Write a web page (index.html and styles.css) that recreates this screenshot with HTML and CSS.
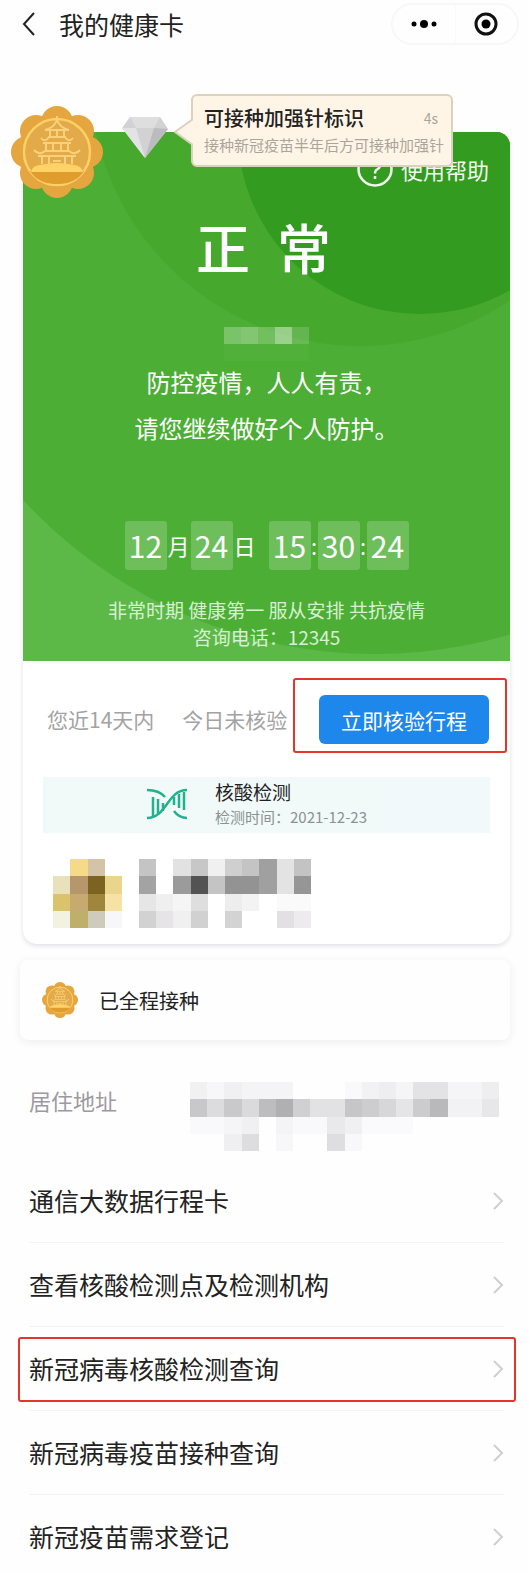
FILE: index.html
```
<!DOCTYPE html>
<html lang="zh-CN">
<head>
  <meta charset="UTF-8">
  <meta name="viewport" content="width=device-width, initial-scale=1.0">
  <title>我的健康卡</title>
  <link rel="stylesheet" href="styles.css">
</head>
<body>
  <svg class="defs" aria-hidden="true">
    <symbol id="medal" viewBox="0 0 92 92">
      <g fill="#e5a53f">
        <circle cx="46" cy="46" r="38"/>
        <circle cx="46" cy="16" r="16"/>
        <circle cx="67" cy="25" r="16"/>
        <circle cx="76" cy="46" r="16"/>
        <circle cx="67" cy="67" r="16"/>
        <circle cx="46" cy="76" r="16"/>
        <circle cx="25" cy="67" r="16"/>
        <circle cx="16" cy="46" r="16"/>
        <circle cx="25" cy="25" r="16"/>
      </g>
      <circle cx="46" cy="46" r="33" fill="#e2aa49" stroke="#ffd067" stroke-width="2.5"/>
      <path d="M19 65h54q-8 13-27 13t-27-13z" fill="#e09c2c"/>
      <path d="M20 66q1-6 9-7 17-4 34 0 8 1 9 7z" fill="#ffd267"/>
      <g fill="none" stroke="#fad17a" stroke-width="2">
        <path d="M46 10v6M46 14q-3 8-12 10h24q-9-2-12-10zM39 25v6M46 25v6M53 25v6"/>
        <path d="M30 32q4 5 8-1h16q4 6 8 1M32 37h28M35 38v6M42 38v6M50 38v6M57 38v6"/>
        <path d="M23 44q5 6 11 1h24q6 5 11-1M27 50h38M31 51v7M38 51v7M42 55h8M54 51v7M61 51v7"/>
      </g>
    </symbol>
    <symbol id="arrow" viewBox="0 0 12 20">
      <path d="M2 2l8 8-8 8" fill="none" stroke="currentColor" stroke-width="2"/>
    </symbol>
  </svg>

  <header class="top-bar">
    <a href="#" class="back" aria-label="返回">
      <svg width="14" height="24" viewBox="0 0 14 24"><path d="M12 1L2 12l10 11" fill="none" stroke="#222" stroke-width="2"/></svg>
    </a>
    <h1>我的健康卡</h1>
    <div class="capsule">
      <button type="button" aria-label="更多">
        <svg width="28" height="24" viewBox="0 0 28 24"><circle cx="4" cy="12" r="2.5"/><circle cx="14" cy="12" r="4"/><circle cx="24" cy="12" r="2.5"/></svg>
      </button>
      <button type="button" aria-label="关闭">
        <svg width="24" height="24" viewBox="0 0 24 24"><circle cx="12" cy="12" r="10" fill="none" stroke="#111" stroke-width="3"/><circle cx="12" cy="12" r="4.5"/></svg>
      </button>
    </div>
  </header>

  <main>
    <section class="card">
      <svg class="medal-large" width="92" height="92"><use href="#medal"/></svg>
      <svg class="diamond" width="46" height="42" viewBox="0 0 46 42">
        <path d="M8 1h30l8 12-23 29L0 12z" fill="#d2d2d4"/>
        <path d="M8 1h30l-6 11H14z" fill="#dededf"/>
        <path d="M0 12h14l9 30z" fill="#e3e3e5"/>
        <path d="M46 13l-14-1-9 30z" fill="#bcbcbf"/>
      </svg>
      <div class="tooltip" role="status">
        <svg class="tip" width="19" height="28" viewBox="0 0 19 28"><path d="M19 1L1 14l18 13" fill="#fff5e6" stroke="#d9d2bc" stroke-width="2"/></svg>
        <div class="tooltip-head"><strong>可接种加强针标识</strong><span>4s</span></div>
        <p>接种新冠疫苗半年后方可接种加强针</p>
      </div>

      <div class="status">
        <svg class="status-bg" viewBox="0 0 487 530" preserveAspectRatio="xMaxYMin slice" aria-hidden="true">
          <rect width="487" height="530" fill="#5cb948"/>
          <circle cx="352" cy="43" r="479" fill="#4cae34"/>
          <circle cx="337" cy="-56" r="270" fill="#46a92e"/>
          <circle cx="397" cy="0" r="182" fill="#339b20"/>
        </svg>
        <a href="#" class="help">
          <svg width="36" height="36" viewBox="0 0 36 36" fill="none" stroke="#f1faee" stroke-width="2.5"><circle cx="18" cy="18" r="16.5"/><path d="M13 14q0-5 5-5t5 5q0 3-3 4.500-2 1-2 4M18 25v3"/></svg>
          使用帮助
        </a>
        <h2><span>正</span><span>常</span></h2>
        <svg class="name-mosaic" width="85" height="34" viewBox="0 0 5 2" shape-rendering="crispEdges" fill="#fff">
          <path d="M0 0h1v1H0z" opacity=".26"/><path d="M1 0h1v1H1z" opacity=".3"/><path d="M2 0h1v1H2z" opacity=".22"/><path d="M3 0h1v1H3z" opacity=".44"/><path d="M4 0h1v1H4z" opacity=".16"/>
          <path d="M0 1h5v1H0z" opacity=".03"/>
        </svg>
        <p class="slogan">防控疫情，人人有责，<br>请您继续做好个人防护。</p>
        <div class="clock">
          <b>12</b><span>月</span><b>24</b><span>日</span>
          <b class="hour">15</b><i>:</i><b>30</b><i>:</i><b>24</b>
        </div>
        <p class="note">非常时期 健康第一 服从安排 共抗疫情<br>咨询电话：12345</p>
      </div>

      <div class="trip">
        <p><span>您近14天内</span><span>今日未核验</span></p>
        <div class="marked"><button type="button">立即核验行程</button></div>
      </div>

      <div class="test">
        <svg width="42" height="32" viewBox="0 0 42 32" fill="none" stroke="#20b28c" stroke-width="2.500">
          <path d="M1 2q12 0 18 7M1 30c20 0 20-28 40-28M28 23q5 7 13 7"/>
          <path d="M7 9v20M12 11v16M17 15v8M28 9v8M33 6v14M38 4v18"/>
        </svg>
        <div>
          <h3>核酸检测</h3>
          <p>检测时间：2021-12-23</p>
        </div>
      </div>

      <div class="person">
        <svg width="69" height="69" viewBox="0 0 4 4" shape-rendering="crispEdges">
          <path d="M1 0h1v1H1z" fill="#f5da87"/><path d="M2 0h1v1H2z" fill="#d3c4a7"/>
          <path d="M0 1h1v1H0z" fill="#e9e1bc"/><path d="M1 1h1v1H1z" fill="#b6976b"/><path d="M2 1h1v1H2z" fill="#7d6321"/><path d="M3 1h1v1H3z" fill="#e9d58c"/>
          <path d="M0 2h1v1H0z" fill="#dbc36c"/><path d="M1 2h1v1H1z" fill="#c7aa70"/><path d="M2 2h1v1H2z" fill="#a0863d"/><path d="M3 2h1v1H3z" fill="#f8e1a4"/>
          <path d="M0 3h1v1H0z" fill="#f1f2df"/><path d="M1 3h1v1H1z" fill="#beb06a"/><path d="M2 3h1v1H2z" fill="#cecbbd"/><path d="M3 3h1v1H3z" fill="#f8f7f8"/>
        </svg>
        <svg width="172" height="69" viewBox="0 0 10 4" preserveAspectRatio="none" shape-rendering="crispEdges">
          <path d="M0 0h1v1H0z" fill="#c4c4c4"/><path d="M2 0h1v1H2z" fill="#e2e2e2"/><path d="M3 0h1v1H3z" fill="#c7c7c7"/><path d="M4 0h1v1H4z" fill="#f0f0f0"/><path d="M5 0h1v1H5z" fill="#cfcfcf"/><path d="M6 0h1v1H6z" fill="#c4c4c4"/><path d="M7 0h1v2H7z" fill="#a0a0a0"/><path d="M8 0h1v2H8z" fill="#e3e3e3"/><path d="M9 0h1v1H9z" fill="#c3c3c3"/>
          <path d="M0 1h1v1H0z" fill="#a3a3a3"/><path d="M2 1h1v1H2z" fill="#9b9b9b"/><path d="M3 1h1v1H3z" fill="#535353"/><path d="M4 1h1v1H4z" fill="#c4c4c4"/><path d="M5 1h2v1H5z" fill="#939393"/><path d="M9 1h1v1H9z" fill="#969696"/>
          <path d="M0 2h1v1H0z" fill="#e6e6e6"/><path d="M1 2h1v1H1z" fill="#efefef"/><path d="M2 2h1v1H2z" fill="#f5f5f5"/><path d="M3 2h1v1H3z" fill="#dededf"/><path d="M5 2h1v1H5z" fill="#ededed"/><path d="M6 2h1v1H6z" fill="#f3f3f3"/><path d="M8 2h2v1H8z" fill="#fafafa"/>
          <path d="M0 3h1v1H0z" fill="#d3d2d3"/><path d="M1 3h1v1H1z" fill="#e6e4e6"/><path d="M2 3h1v1H2z" fill="#f1f0f1"/><path d="M3 3h1v1H3z" fill="#d2d1d2"/><path d="M5 3h1v1H5z" fill="#d4d3d4"/><path d="M8 3h1v1H8z" fill="#e2e0e2"/><path d="M9 3h1v1H9z" fill="#edebed"/>
        </svg>
      </div>
    </section>

    <section class="vaccine">
      <svg width="36" height="36"><use href="#medal"/></svg>
      <span>已全程接种</span>
    </section>

    <section class="address">
      <span>居住地址</span>
      <svg width="309" height="69" viewBox="0 0 18 4" preserveAspectRatio="none" shape-rendering="crispEdges">
        <path d="M0 0h1v1H0z" fill="#f2f1f2"/><path d="M1 0h1v1H1z" fill="#f7f6f8"/><path d="M2 0h1v1H2z" fill="#f0eff1"/><path d="M3 0h3v1H3z" fill="#f4f3f5"/><path d="M9 0h1v1H9z" fill="#f9f8fa"/><path d="M10 0h1v1h-1z" fill="#f2f1f3"/><path d="M11 0h1v1h-1z" fill="#eeedef"/><path d="M12 0h1v1h-1z" fill="#f5f4f6"/><path d="M13 0h2v1h-2z" fill="#e3e2e4"/><path d="M15 0h2v1h-2z" fill="#f5f4f6"/><path d="M17 0h1v1h-1z" fill="#eeedef"/>
        <path d="M0 1h1v1H0z" fill="#c8c7c9"/><path d="M1 1h1v1H1z" fill="#dcdbdd"/><path d="M2 1h1v1H2z" fill="#c9c8ca"/><path d="M3 1h1v1H3z" fill="#dad9db"/><path d="M4 1h1v1H4z" fill="#bdbcbe"/><path d="M5 1h1v1H5z" fill="#b0afb1"/><path d="M6 1h1v1H6z" fill="#d0cfd1"/><path d="M7 1h2v1H7z" fill="#e2e1e3"/><path d="M9 1h1v1H9z" fill="#c6c5c7"/><path d="M10 1h1v1h-1z" fill="#cdccce"/><path d="M11 1h1v1h-1z" fill="#d7d6d8"/><path d="M12 1h1v1h-1z" fill="#e5e4e6"/><path d="M13 1h1v1h-1z" fill="#cccbcd"/><path d="M14 1h1v1h-1z" fill="#b9b8ba"/><path d="M15 1h1v1h-1z" fill="#f2f1f4"/><path d="M16 1h1v1h-1z" fill="#f2f1f4"/><path d="M17 1h1v1h-1z" fill="#e7e6e9"/>
        <path d="M0 2h2v1H0z" fill="#f9f8fa"/><path d="M2 2h1v1H2z" fill="#f5f4f6"/><path d="M3 2h1v1H3z" fill="#f0eff1"/><path d="M5 2h1v1H5z" fill="#f4f3f5"/><path d="M6 2h2v1H6z" fill="#f9f8fa"/><path d="M8 2h1v1H8z" fill="#e9e8ea"/><path d="M9 2h1v1H9z" fill="#f0eff1"/><path d="M10 2h3v1h-3z" fill="#faf9fb"/>
        <path d="M2 3h1v1H2z" fill="#efeef0"/><path d="M3 3h1v1H3z" fill="#dddcde"/><path d="M5 3h1v1H5z" fill="#f7f6f8"/><path d="M8 3h1v1H8z" fill="#dedde0"/><path d="M9 3h1v1H9z" fill="#f8f7f9"/>
      </svg>
    </section>

    <ul class="links">
      <li><a href="#">通信大数据行程卡<svg width="12" height="20"><use href="#arrow"/></svg></a></li>
      <li><a href="#">查看核酸检测点及检测机构<svg width="12" height="20"><use href="#arrow"/></svg></a></li>
      <li class="current"><a href="#">新冠病毒核酸检测查询<svg width="12" height="20"><use href="#arrow"/></svg></a></li>
      <li><a href="#">新冠病毒疫苗接种查询<svg width="12" height="20"><use href="#arrow"/></svg></a></li>
      <li><a href="#">新冠疫苗需求登记<svg width="12" height="20"><use href="#arrow"/></svg></a></li>
    </ul>
  </main>
</body>
</html>
```
FILE: styles.css
```
* {
  box-sizing: border-box;
}
body {
  margin: 0;
  background: #fefefe;
  color: #222;
  font-family: "Noto Sans CJK SC", sans-serif;
}
h1, h2, h3, p, ul {
  margin: 0;
  padding: 0;
  font-weight: normal;
}
a {
  color: inherit;
  text-decoration: none;
}
button {
  border: none;
  background: none;
  padding: 0;
  font-family: inherit;
  cursor: pointer;
}
svg {
  display: block;
  flex-shrink: 0;
}
.defs {
  position: absolute;
  width: 0;
  height: 0;
}

/* header */
.top-bar {
  display: flex;
  align-items: center;
  height: 48px;
  padding: 0 10px 0 22px;
}
.top-bar h1 {
  margin-left: 23px;
  font-size: 25px;
  line-height: 36px;
}
.capsule {
  display: flex;
  width: 128px;
  height: 42px;
  margin-left: auto;
  border: 2px solid #f7f7f7;
  border-radius: 21px;
}
.capsule button {
  flex: 1;
  display: flex;
  align-items: center;
  justify-content: center;
}
.capsule button + button {
  border-left: 1px solid #fafafa;
}

/* health card */
.card {
  position: relative;
  margin: 84px 19px 0 23px;
  border-radius: 14px;
  background: #fff;
  box-shadow: 0 2px 4px rgba(60, 40, 70, 0.14);
}
.medal-large {
  position: absolute;
  z-index: 2;
  left: -12px;
  top: -26px;
}
.diamond {
  position: absolute;
  z-index: 2;
  left: 99px;
  top: -16px;
}
.tooltip {
  position: absolute;
  z-index: 3;
  left: 168px;
  top: -38px;
  width: 262px;
  padding: 7px 5px 8px 11px;
  border: 2px solid #d9d2bc;
  border-radius: 6px;
  background: #fff5e6;
}
.tip {
  position: absolute;
  left: -19px;
  top: 22px;
}
.tooltip-head {
  display: flex;
  align-items: center;
  justify-content: space-between;
  padding-right: 8px;
  line-height: 30px;
}
.tooltip strong {
  font-size: 20px;
  font-weight: 500;
}
.tooltip span {
  font-size: 14px;
  color: #aaa59b;
}
.tooltip p {
  font-size: 15px;
  line-height: 24px;
  white-space: nowrap;
  color: #aaa59b;
}

.status {
  position: relative;
  display: flex;
  flex-direction: column;
  align-items: center;
  padding: 19px 0 11px;
  border-radius: 14px 14px 0 0;
  overflow: hidden;
  color: #fff;
}
.status > * {
  position: relative;
}
.status .status-bg {
  position: absolute;
  left: 0;
  top: 0;
  width: 100%;
  height: 100%;
}
.help {
  display: flex;
  align-items: center;
  gap: 8px;
  align-self: flex-end;
  margin-right: 21px;
  font-size: 22px;
  line-height: 36px;
  color: #f1faee;
}
.status h2 {
  display: flex;
  gap: 27px;
  margin-top: 20px;
  padding-right: 6px;
  font-size: 54px;
  line-height: 80px;
  font-weight: 500;
}
.name-mosaic {
  margin-top: 40px;
}
.slogan {
  margin-top: -2px;
  font-size: 24px;
  line-height: 46px;
  text-align: center;
  white-space: nowrap;
}
.clock {
  display: flex;
  align-items: center;
  margin-top: 70px;
  line-height: 49px;
}
.clock b {
  width: 42px;
  border-radius: 3px;
  background: rgba(255, 255, 255, 0.2);
  font-size: 30px;
  font-weight: normal;
  text-align: center;
}
.clock span {
  width: 24px;
  font-size: 22px;
  text-align: center;
}
.clock i {
  width: 7px;
  font-size: 22px;
  font-style: normal;
  text-align: center;
}
.clock .hour {
  margin-left: 12px;
}
.note {
  margin-top: 26px;
  font-size: 19px;
  line-height: 27px;
  text-align: center;
  color: #d8f0d2;
}

.trip {
  display: flex;
  align-items: center;
  justify-content: space-between;
  padding: 17px 3px 24px 24px;
}
.trip p {
  display: flex;
  gap: 28px;
  padding-top: 6px;
  font-size: 21px;
  color: #a3a3a3;
  white-space: nowrap;
}
.marked {
  padding: 15px 16px 7px 24px;
  border: 2px solid #e2352c;
  border-radius: 3px;
}
.marked button {
  width: 170px;
  height: 49px;
  border-radius: 6px;
  background: #1d87ec;
  color: #fff;
  font-size: 21px;
}
.test {
  display: flex;
  gap: 27px;
  margin: 0 20px;
  padding: 2px 0 4px 103px;
  align-items: center;
  background: linear-gradient(90deg, #f1faf8, #f1f9fa);
}
.test h3 {
  font-size: 19px;
  line-height: 26px;
}
.test p {
  font-size: 15px;
  line-height: 24px;
  color: #8c9292;
}
.person {
  display: flex;
  gap: 17px;
  padding: 26px 30px 16px;
}

/* vaccination */
.vaccine {
  display: flex;
  align-items: center;
  gap: 21px;
  height: 80px;
  margin: 16px 19px 0 20px;
  padding-left: 22px;
  border-radius: 8px;
  background: #fefefe;
  box-shadow: 0 2px 8px rgba(60, 40, 70, 0.08);
  font-size: 20px;
}

/* address */
.address {
  display: flex;
  justify-content: space-between;
  margin: 42px 30px 0 29px;
  font-size: 22px;
  line-height: 36px;
  color: #9b9aa0;
}

/* links */
.links {
  padding: 8px 25px 0 29px;
  list-style: none;
}
.links li {
  position: relative;
  border-bottom: 1px solid #f3f3f4;
}
.links li:last-child {
  border-bottom: none;
}
.links a {
  display: flex;
  align-items: center;
  justify-content: space-between;
  padding: 24px 0;
  font-size: 25px;
  line-height: 35px;
}
.links li:last-child a {
  padding-bottom: 17px;
}
.links svg {
  color: #cfcfd0;
}
.links .current::after {
  content: "";
  position: absolute;
  inset: 10px -12px 8px -11px;
  border: 2px solid #e2352c;
  border-radius: 3px;
  pointer-events: none;
}
```
